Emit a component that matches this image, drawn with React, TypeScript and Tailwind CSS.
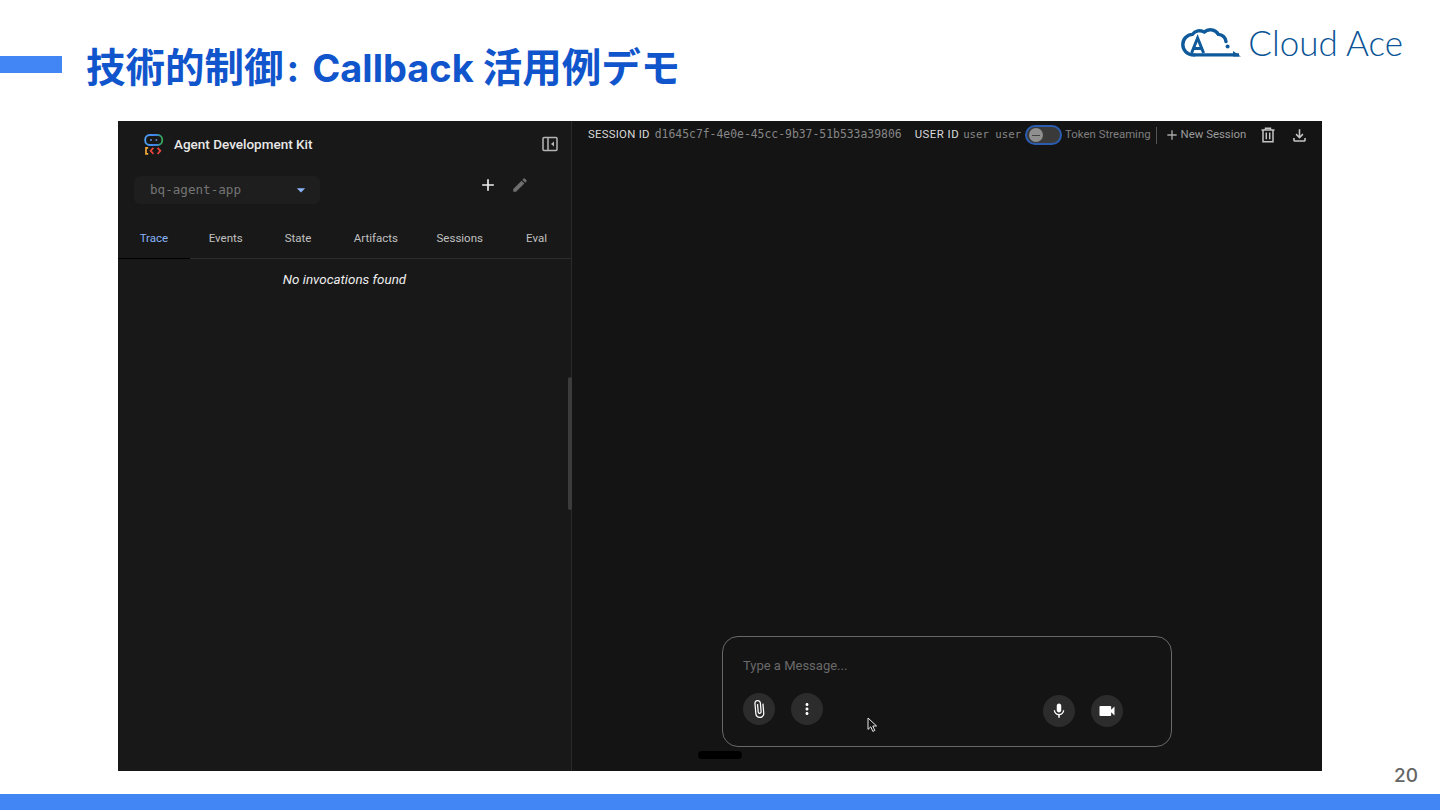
import { MdAdd, MdEdit, MdAttachFile, MdMoreVert, MdMic, MdVideocam, MdOutlineFileDownload, MdArrowDropDown } from "react-icons/md";

function AdkLogo() {
  return (
    <svg width="20" height="21" viewBox="0 0 20 21" fill="none" className="shrink-0">
      <defs>
        <linearGradient id="adkg" x1="0" y1="0" x2="1" y2="0">
          <stop offset="0" stopColor="#4fa3f5" />
          <stop offset="0.6" stopColor="#3f7fe8" />
          <stop offset="1" stopColor="#34a853" />
        </linearGradient>
      </defs>
      <rect x="1.2" y="1" width="17" height="10" rx="4.4" stroke="url(#adkg)" strokeWidth="1.8" />
      <circle cx="7" cy="6" r="1" fill="#5f87c9" />
      <circle cx="12.4" cy="6" r="1" fill="#5f87c9" />
      <path d="M4.2 13.8H2V19.8H4.2" stroke="#f2a93b" strokeWidth="1.7" />
      <path d="M9.4 13.8L6.6 16.8L9.4 19.8" stroke="#e8453c" strokeWidth="1.7" />
      <path d="M13.6 13.8L16.4 16.8L13.6 19.8" stroke="#e8453c" strokeWidth="1.7" />
    </svg>
  );
}

function CloudAceLogo() {
  return (
    <div className="flex items-center">
      <svg width="60" height="29" viewBox="0 0 60 29" fill="none" className="shrink-0">
        <path
          d="M13 27C6.4 27 1.8 22.4 1.8 16.6C1.8 11 6 6.8 11.4 6.4C14 2.6 19.4 1.6 23.4 4C27 0.6 34.4 1 37.4 6.4C41.4 6.4 44.6 9.6 45 13.6"
          stroke="#0f5a9a"
          strokeWidth="3.4"
          strokeLinecap="round"
        />
        <path d="M13 26.8H58" stroke="#0f5a9a" strokeWidth="3.2" />
        <path d="M52 23L60 28.4H52Z" fill="#0f5a9a" />
        <circle cx="46.6" cy="18.4" r="2" fill="#0f5a9a" />
        <path d="M10.6 25L16.6 10L22.6 25M13 20.4H20.2" stroke="#0f5a9a" strokeWidth="3" />
      </svg>
      <span className="ml-[7px] font-['Lato',sans-serif] text-[35px] leading-[29px] font-light text-[#0b5596]">Cloud Ace</span>
    </div>
  );
}

function Header() {
  return (
    <header className="flex h-[121px] shrink-0 items-start bg-white">
      <div className="mt-[56px] h-[17px] w-[62px] shrink-0 bg-[#4285f4]" />
      <h1 className="mt-[40px] ml-[24px] font-['Noto_Sans_CJK_JP',sans-serif] text-[39.5px] leading-[50px] font-bold whitespace-nowrap text-[#1155cc]">
        技術的制御
        <span className="ml-[3px] font-['Inter','Noto_Sans_CJK_JP',sans-serif] text-[38px]">:</span>
        <span className="ml-[4px] font-['Inter','Noto_Sans_CJK_JP',sans-serif] text-[38px]"> Callback </span>
        活用例デモ
      </h1>
      <div className="mt-[28px] mr-[37px] ml-auto">
        <CloudAceLogo />
      </div>
    </header>
  );
}

const tabs = [
  { label: "Trace", w: "w-[72px]", active: true },
  { label: "Events", w: "w-[72px]" },
  { label: "State", w: "w-[73px]" },
  { label: "Artifacts", w: "w-[83px]" },
  { label: "Sessions", w: "w-[85px]" },
  { label: "Eval", w: "w-[69px]" },
];

function Sidebar() {
  return (
    <aside className="relative flex w-[454px] shrink-0 flex-col border-r border-[#2a2a2a] bg-[#181818]">
      <div className="flex h-[46px] items-center pr-[13px] pl-[26px]">
        <AdkLogo />
        <span className="ml-[10px] font-['Roboto',sans-serif] text-[13.5px] font-medium text-[#e8e8e8]">Agent Development Kit</span>
        <svg width="16" height="16" viewBox="0 0 16 16" fill="none" className="ml-auto">
          <rect x="1" y="1.5" width="14" height="13" rx="1" stroke="#b5b5b5" strokeWidth="1.5" />
          <path d="M6 1.5V14.5" stroke="#b5b5b5" strokeWidth="1.5" />
          <path d="M12 5.5V10.5L9 8Z" fill="#b5b5b5" />
        </svg>
      </div>
      <div className="mt-[9px] flex items-center pl-[16px]">
        <div className="flex h-[28px] w-[186px] items-center rounded-md bg-[#1e1e1e] pr-[9px] pl-[16px]">
          <span className="font-['DejaVu_Sans_Mono',monospace] text-[12.6px] text-[#757575]">bq-agent-app</span>
          <MdArrowDropDown className="ml-auto text-[20px] text-[#8ab4f8]" />
        </div>
        <MdAdd className="ml-[158px] -translate-y-[5px] text-[20px] text-[#eeeeee]" />
        <MdEdit className="ml-[13px] -translate-y-[5px] text-[18px] text-[#6e6e6e]" />
      </div>
      <div className="mt-[20px] flex h-[35px] border-b border-[#2c2c2c]">
        {tabs.map((t) => (
          <div
            key={t.label}
            className={`flex items-center justify-center pb-[4px] font-['Roboto',sans-serif] text-[11.5px] ${t.w} ${
              t.active ? "-mb-px border-b border-black text-[#8ab4f8]" : "text-[#c0c0c0]"
            }`}
          >
            {t.label}
          </div>
        ))}
      </div>
      <p className="mt-[11px] text-center font-['Roboto',sans-serif] text-[13.4px] text-[#eeeeee] italic">No invocations found</p>
      <div className="absolute top-[256px] -right-px h-[133px] w-[4px] rounded-sm bg-[#3c3c3c]" />
    </aside>
  );
}

function TrashIcon() {
  return (
    <svg width="16" height="16" viewBox="0 0 16 16" fill="none" className="ml-[14px] shrink-0">
      <path d="M1.5 3H14.5M5.5 3V1.2H10.5V3M3 3V14.8H13V3M6.3 5.6V12.2M9.7 5.6V12.2" stroke="#c4c4c4" strokeWidth="1.5" />
    </svg>
  );
}

function SessionBar() {
  return (
    <div className="flex h-[27px] items-center pt-[1px] pl-[16px] font-['Roboto',sans-serif] text-[11.4px] whitespace-nowrap">
      <span className="tracking-[0.25px] text-[#d8d8d8]">SESSION ID</span>
      <span className="ml-[5px] font-['DejaVu_Sans_Mono',monospace] text-[11.4px] text-[#868686]">d1645c7f-4e0e-45cc-9b37-51b533a39806</span>
      <span className="ml-[13px] tracking-[0.5px] text-[#d8d8d8]">USER ID</span>
      <span className="ml-[4px] font-['DejaVu_Sans_Mono',monospace] text-[10.7px] text-[#868686]">user user</span>
      <div className="ml-[4px] flex h-[20px] w-[37px] items-center rounded-full border-2 border-[#2a5db0] bg-[#3a3a3a] pl-[2px]">
        <div className="flex h-[14px] w-[14px] items-center justify-center rounded-full bg-[#8f8f8f]">
          <div className="h-px w-[8px] bg-[#444444]" />
        </div>
      </div>
      <span className="ml-[3px] text-[#7f7f7f]">Token Streaming</span>
      <div className="ml-[5px] h-[17px] w-px bg-[#555555]" />
      <MdAdd className="ml-[7px] text-[16px] text-[#a8a8a8]" />
      <span className="ml-[1px] text-[#9a9a9a]">New Session</span>
      <TrashIcon />
      <MdOutlineFileDownload className="ml-[14px] text-[19px] text-[#c4c4c4]" />
    </div>
  );
}

function RoundButton({ children, className = "" }: { children: React.ReactNode; className?: string }) {
  return <div className={`flex h-[32px] w-[32px] items-center justify-center rounded-full bg-[#2c2c2c] text-white ${className}`}>{children}</div>;
}

function Composer() {
  return (
    <div className="mx-auto mb-[24px] flex h-[111px] w-[450px] flex-col rounded-2xl border border-[#686868] px-[20px] pt-[20px]">
      <p className="font-['Roboto',sans-serif] text-[13px] leading-[18px] text-[#6a6a6a]">Type a Message...</p>
      <div className="mt-[18px] flex items-start">
        <RoundButton>
          <MdAttachFile className="-rotate-[5deg] text-[20px]" />
        </RoundButton>
        <RoundButton className="ml-[16px]">
          <MdMoreVert className="text-[18px]" />
        </RoundButton>
        <RoundButton className="mt-[2px] ml-auto">
          <MdMic className="text-[18px]" />
        </RoundButton>
        <RoundButton className="mt-[2px] mr-[28px] ml-[16px]">
          <MdVideocam className="text-[20px]" />
        </RoundButton>
      </div>
    </div>
  );
}

function Main() {
  return (
    <main className="relative flex min-w-0 flex-1 flex-col bg-[#141414]">
      <SessionBar />
      <div className="flex-1" />
      <Composer />
      <div className="absolute bottom-[12px] left-[126px] h-[8px] w-[44px] rounded-full bg-black" />
      <svg width="11" height="16" viewBox="0 0 11 16" className="absolute bottom-[38px] left-[295px]">
        <path d="M1 1V12.4L3.8 9.8L5.8 14.4L7.8 13.5L5.8 9H9.6Z" fill="#111111" stroke="#e6e6e6" strokeWidth="1" />
      </svg>
    </main>
  );
}

export default function App() {
  return (
    <div className="flex h-[810px] w-[1440px] flex-col overflow-hidden bg-white">
      <Header />
      <div className="ml-[118px] flex h-[650px] w-[1204px] shrink-0">
        <Sidebar />
        <Main />
      </div>
      <div className="flex h-[23px] shrink-0 items-start justify-end pr-[22px]">
        <span className="-mt-[5px] font-['Inter',sans-serif] text-[19px] leading-[19px] font-medium text-[#666666]">20</span>
      </div>
      <div className="h-[16px] shrink-0 bg-[#4285f4]" />
    </div>
  );
}
